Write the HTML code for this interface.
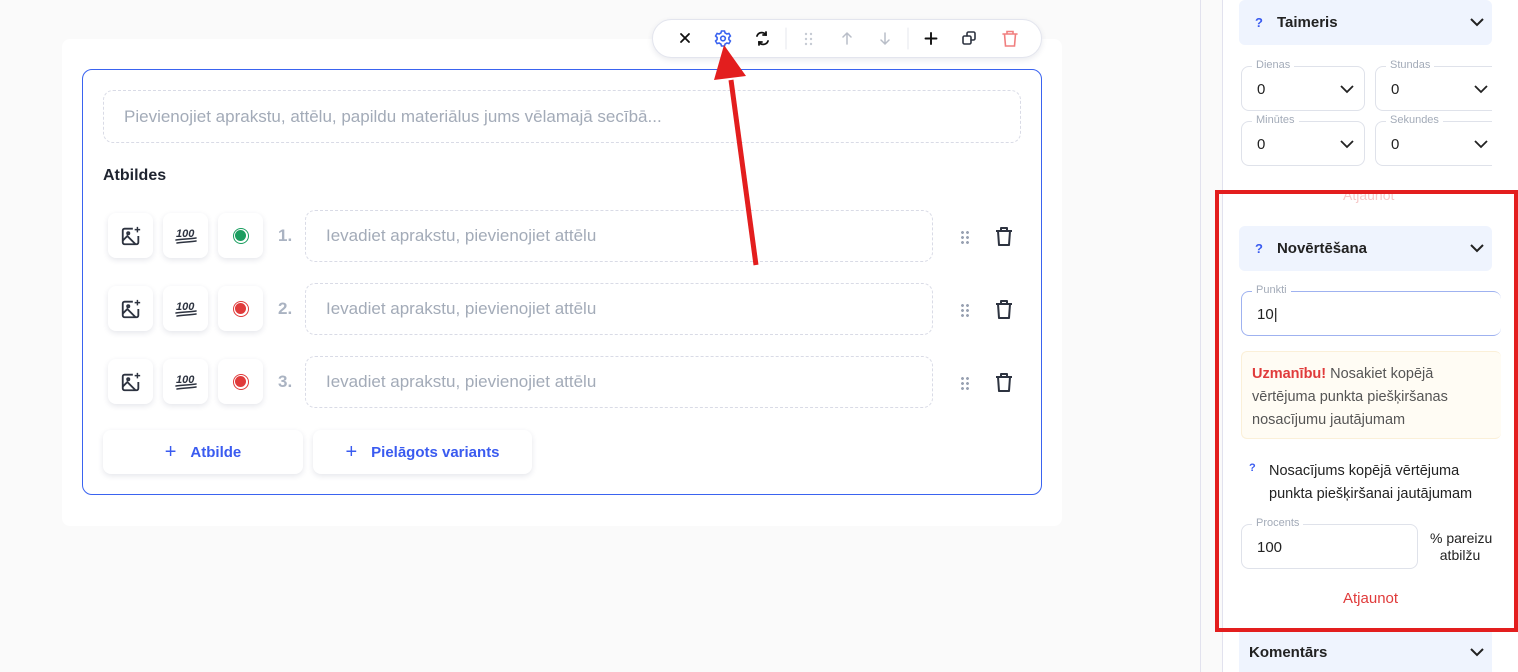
<!DOCTYPE html>
<html><head><meta charset="utf-8"><style>
*{box-sizing:border-box;margin:0;padding:0}
body{width:1518px;height:672px;overflow:hidden;background:#fafafa;font-family:"Liberation Sans",sans-serif;position:relative;color:#1f2430}
.abs{position:absolute}
.card{left:62px;top:39px;width:1000px;height:487px;background:#fff;border-radius:8px}
.inner{left:82px;top:69px;width:960px;height:426px;border:1px solid #3a63f0;border-radius:10px}
.dash{border:1.5px dashed #d9dbe6;border-radius:10px;color:#a3abb8;font-size:17px;display:flex;align-items:center;padding-left:20px}
.ib{width:45px;height:45px;background:#fff;border-radius:8px;box-shadow:0 2px 6px rgba(40,50,90,.12);display:flex;align-items:center;justify-content:center}
.num{color:#aab3c2;font-size:17px;font-weight:bold}
.btn{background:#fff;border-radius:8px;box-shadow:0 2px 6px rgba(40,50,90,.12);color:#3a5bf0;font-size:15px;font-weight:bold;display:flex;align-items:center;justify-content:center;gap:14px}
.tb{left:652px;top:19px;width:390px;height:39px;background:#fff;border:1px solid #e3e5ee;border-radius:20px;box-shadow:0 2px 6px rgba(40,50,90,.1)}
.side{left:1222px;top:0;width:296px;height:672px;background:#fff;border-left:1px solid #e2e2ee}
.line2{left:1200px;top:0;width:1px;height:672px;background:#e2e2ee}
.acc{background:#eff4fe;border-radius:6px;height:45px;display:flex;align-items:center;font-size:15px;font-weight:bold;color:#222}
.acc .q{color:#3a5bf0;font-size:13px;margin:0 14px 0 16px}
.fld{border:1px solid #dfe2ea;border-radius:8px;height:45px}
.fld .lb{position:absolute;top:-8px;left:10px;background:#fff;padding:0 4px;font-size:11px;color:#a3abb8}
.fld .v{position:absolute;left:15px;top:14px;font-size:15px;color:#222}
</style></head><body>
<div class="abs line2"></div>
<div class="abs card"></div>
<div class="abs inner"></div>
<div class="abs dash" style="left:103px;top:90px;width:918px;height:53px">Pievienojiet aprakstu, attēlu, papildu materiālus jums vēlamajā secībā...</div>
<div class="abs" style="left:103px;top:167px;font-size:16px;font-weight:bold">Atbildes</div>

<div id="rows"></div>
<script>
var r='',ys=[210,283,356],cols=['#1a9e5f','#e03b3b','#e03b3b'];
for(var i=0;i<3;i++){var y=ys[i];
r+='<div class="abs ib" style="left:108px;top:'+(y+3)+'px"><svg width="22" height="22" viewBox="0 0 24 24" fill="none" stroke="#2d3340" stroke-width="2" stroke-linejoin="round"><path d="M14 4H5a2 2 0 0 0-2 2v13a2 2 0 0 0 2 2h13a2 2 0 0 0 2-2v-7"/><path d="M3 17l5-5 9 9"/><circle cx="9" cy="9" r="1.2"/><path d="M19 2v6M16 5h6" stroke-width="1.6"/></svg></div>';
r+='<div class="abs ib" style="left:163px;top:'+(y+3)+'px"><svg width="24" height="18" viewBox="0 0 24 18" fill="none" stroke="#2d3340" stroke-width="1.6" stroke-linecap="round"><text x="2" y="10" font-family="Liberation Sans" font-style="italic" font-weight="bold" font-size="11" fill="#2d3340" stroke="none">100</text><path d="M2 13c6-1 14-1 20-2M3 16c6-1 13-1 19-2"/></svg></div>';
r+='<div class="abs ib" style="left:218px;top:'+(y+3)+'px"><div style="width:16px;height:16px;border-radius:50%;border:1.5px solid '+cols[i]+';display:flex;align-items:center;justify-content:center"><div style="width:11px;height:11px;border-radius:50%;background:'+cols[i]+'"></div></div></div>';
r+='<div class="abs num" style="left:278px;top:'+(y+16)+'px">'+(i+1)+'.</div>';
r+='<div class="abs dash" style="left:305px;top:'+y+'px;width:628px;height:52px">Ievadiet aprakstu, pievienojiet attēlu</div>';
r+='<div class="abs" style="left:960px;top:'+(y+20)+'px;width:10px;height:14px;background:radial-gradient(circle,#9aa3b3 1.3px,transparent 1.6px) 0 0/5px 5px"></div>';
r+='<svg class="abs" style="left:994px;top:'+(y+16)+'px" width="20" height="21" viewBox="0 0 20 21" fill="none" stroke="#2d3340" stroke-width="2" stroke-linejoin="round"><path d="M2 5h16M7 5V2h6v3M4 5l1 14h10l1-14"/></svg>';}
document.getElementById('rows').innerHTML=r;
</script>
<div class="abs btn" style="left:103px;top:430px;width:200px;height:44px"><span style="font-size:20px;font-weight:normal">+</span>Atbilde</div>
<div class="abs btn" style="left:313px;top:430px;width:219px;height:44px"><span style="font-size:20px;font-weight:normal">+</span>Pielāgots variants</div>

<div class="abs tb"></div>
<svg class="abs" style="left:652px;top:19px" width="390" height="39" viewBox="0 0 390 39" fill="none" stroke-linecap="round">
<path d="M29 15l8 8M37 15l-8 8" stroke="#111" stroke-width="1.8"/>
<g stroke="#3a63f0" stroke-width="1.6"><circle cx="71" cy="19.5" r="2.3"/><path d="M69.5 12h3l.6 2 1.8 1 2-.6 1.5 2.6-1.5 1.5v2l1.5 1.5-1.5 2.6-2-.6-1.8 1-.6 2h-3l-.6-2-1.8-1-2 .6-1.5-2.6 1.5-1.5v-2l-1.5-1.5 1.5-2.6 2 .6 1.8-1z"/></g>
<g stroke="#111" stroke-width="1.8"><path d="M105 17a5 5 0 0 1 9-1M116 22a5 5 0 0 1-9 1"/><path d="M114 13v3h-3M107 26v-3h3"/></g>
<path d="M134 9v21M256 9v21" stroke="#e6e7ee" stroke-width="1"/>
<g fill="#c6cbd4" stroke="none"><circle cx="154" cy="15" r="1.2"/><circle cx="159" cy="15" r="1.2"/><circle cx="154" cy="20" r="1.2"/><circle cx="159" cy="20" r="1.2"/><circle cx="154" cy="25" r="1.2"/><circle cx="159" cy="25" r="1.2"/></g>
<path d="M195 25V14M191 18l4-4 4 4M233 14v11M229 21l4 4 4-4" stroke="#b9bec8" stroke-width="1.5"/>
<path d="M279 14v11M273.5 19.5h11" stroke="#111" stroke-width="1.9"/>
<g stroke="#2d3340" stroke-width="1.6"><rect x="311" y="17" width="8" height="8" rx="1.5"/><path d="M315 17v-2.5a1.5 1.5 0 0 1 1.5-1.5h5a1.5 1.5 0 0 1 1.5 1.5v5a1.5 1.5 0 0 1-1.5 1.5H319"/></g>
<g stroke="#f07f7f" stroke-width="1.6"><path d="M351 15h14M355 15v-2.5h6V15M352.5 15l1 12h9l1-12"/></g>
</svg>

<div class="abs side"></div>
<div class="abs acc" style="left:1239px;top:0;width:253px;height:45px"><span class="q">?</span>Taimeris<svg style="margin-left:auto;margin-right:8px" width="14" height="9" viewBox="0 0 14 9" fill="none" stroke="#222" stroke-width="2"><path d="M1 1l6 6 6-6"/></svg></div>
<div class="abs fld" style="left:1241px;top:66px;width:124px"><span class="lb">Dienas</span><span class="v">0</span><svg class="abs" style="left:98px;top:18px" width="14" height="9" fill="none" stroke="#222" stroke-width="1.8"><path d="M1 1l6 6 6-6"/></svg></div>
<div class="abs fld" style="left:1375px;top:66px;width:130px;border-right:none"><span class="lb">Stundas</span><span class="v">0</span><svg class="abs" style="left:98px;top:18px" width="14" height="9" fill="none" stroke="#222" stroke-width="1.8"><path d="M1 1l6 6 6-6"/></svg></div>
<div class="abs fld" style="left:1241px;top:121px;width:124px"><span class="lb">Minūtes</span><span class="v">0</span><svg class="abs" style="left:98px;top:18px" width="14" height="9" fill="none" stroke="#222" stroke-width="1.8"><path d="M1 1l6 6 6-6"/></svg></div>
<div class="abs fld" style="left:1375px;top:121px;width:130px;border-right:none"><span class="lb">Sekundes</span><span class="v">0</span><svg class="abs" style="left:98px;top:18px" width="14" height="9" fill="none" stroke="#222" stroke-width="1.8"><path d="M1 1l6 6 6-6"/></svg></div>
<div class="abs" style="left:1343px;top:187px;font-size:14px;color:#f6c9c9">Atjaunot</div>
<div class="abs" style="left:1492px;top:0;width:26px;height:672px;background:#fff"></div>

<div class="abs acc" style="left:1239px;top:226px;width:253px"><span class="q">?</span>Novērtēšana<svg style="margin-left:auto;margin-right:8px" width="14" height="9" viewBox="0 0 14 9" fill="none" stroke="#222" stroke-width="2"><path d="M1 1l6 6 6-6"/></svg></div>
<div class="abs fld" style="left:1241px;top:291px;width:260px;border-color:#9fb2f0;border-right:none"><span class="lb">Punkti</span><span class="v">10<span style="font-weight:100">|</span></span></div>
<div class="abs" style="left:1241px;top:351px;width:260px;height:88px;background:#fffcf4;border:1px solid #fbf0d8;border-right:none;border-radius:6px;padding:11px 10px;font-size:14.5px;line-height:23px;color:#555">
<b style="color:#e03b3b">Uzmanību!</b> Nosakiet kopējā<br>vērtējuma punkta piešķiršanas<br>nosacījumu jautājumam</div>
<div class="abs" style="left:1249px;top:462px;font-size:11px;color:#3a5bf0;font-weight:bold">?</div>
<div class="abs" style="left:1269px;top:460px;font-size:14.5px;line-height:23px;color:#222">Nosacījums kopējā vērtējuma<br>punkta piešķiršanai jautājumam</div>
<div class="abs fld" style="left:1241px;top:524px;width:177px"><span class="lb">Procents</span><span class="v">100</span></div>
<div class="abs" style="left:1430px;top:530px;width:60px;font-size:14px;line-height:17px;text-align:center;color:#222;white-space:nowrap">% pareizu<br>atbilžu</div>
<div class="abs" style="left:1343px;top:590px;font-size:15px;color:#e03b3b">Atjaunot</div>
<div class="abs acc" style="left:1239px;top:632px;width:253px;height:40px;border-radius:0;padding-left:10px">Komentārs<svg style="margin-left:auto;margin-right:8px" width="14" height="9" viewBox="0 0 14 9" fill="none" stroke="#222" stroke-width="2"><path d="M1 1l6 6 6-6"/></svg></div>

<div class="abs" style="left:1215px;top:190px;width:303px;height:442px;border:4px solid #e31e1e"></div>
<svg class="abs" style="left:700px;top:40px" width="80" height="240" fill="none">
<path d="M56 225L31 40" stroke="#e31e1e" stroke-width="5"/>
<path d="M24 5L14 40L46 36Z" fill="#e31e1e"/>
</svg>
</body></html>
